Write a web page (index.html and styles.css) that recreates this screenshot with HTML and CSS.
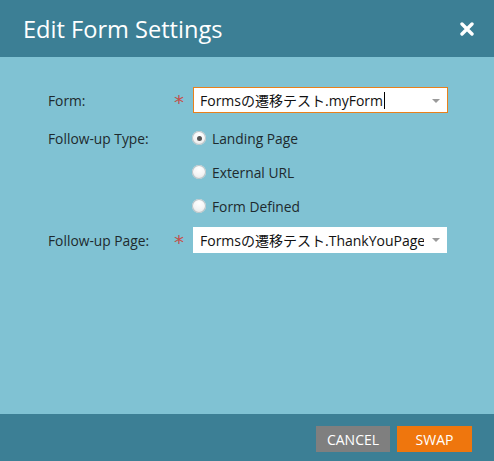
FILE: index.html
```html
<!DOCTYPE html>
<html>
<head>
<meta charset="utf-8">
<link rel="stylesheet" href="styles.css">
</head>
<body>
<div class="dialog">
  <div class="header">
    <span class="title">Edit Form Settings</span>
    <svg class="close" width="14" height="14" viewBox="0 0 14 14"><path d="M2 2 L12 12 M12 2 L2 12" stroke="#fff" stroke-width="3.4" stroke-linecap="round"/></svg>
  </div>
  <div class="content">
    <div class="row row-form">
      <div class="label">Form:</div>
      <div class="req">*</div>
      <div class="select focused"><span class="val">Formsの遷移テスト.myForm</span><span class="caret"></span><span class="arrow"></span></div>
    </div>
    <div class="row row-r1">
      <div class="label">Follow-up Type:</div>
      <div class="req"></div>
      <div class="radio"><span class="dot checked"></span><span>Landing Page</span></div>
    </div>
    <div class="row row-r2">
      <div class="label"></div>
      <div class="req"></div>
      <div class="radio"><span class="dot"></span><span>External URL</span></div>
    </div>
    <div class="row row-r3">
      <div class="label"></div>
      <div class="req"></div>
      <div class="radio"><span class="dot"></span><span>Form Defined</span></div>
    </div>
    <div class="row row-page">
      <div class="label">Follow-up Page:</div>
      <div class="req">*</div>
      <div class="select"><span class="val">Formsの遷移テスト.ThankYouPage</span><span class="arrow"></span></div>
    </div>
  </div>
  <div class="footer">
    <button class="btn cancel">CANCEL</button>
    <button class="btn swap">SWAP</button>
  </div>
</div>
</body>
</html>
```

FILE: styles.css
```css
html, body {
  margin: 0;
  padding: 0;
}
body {
  font-family: "Open Sans", "Noto Sans CJK JP", sans-serif;
  width: 494px;
  height: 461px;
  overflow: hidden;
}
.dialog {
  width: 494px;
  height: 461px;
  display: flex;
  flex-direction: column;
  background: #80c2d3;
}
.header {
  height: 57px;
  background: #3c7f95;
  display: flex;
  align-items: center;
  justify-content: space-between;
  padding: 0 20px 0 23px;
  box-sizing: border-box;
}
.title {
  color: #fff;
  font-size: 23.6px;
  line-height: 28px;
  margin-top: 1px;
}
.close {
  display: block;
}
.content {
  flex: 1;
  padding: 30px 0 0 48px;
  display: flex;
  flex-direction: column;
}
.row {
  display: flex;
  align-items: center;
}
.row-form { height: 26px; }
.row-r1 { height: 20px; margin-top: 15px; }
.row-r2 { height: 20px; margin-top: 14px; }
.row-r3 { height: 20px; margin-top: 14px; }
.row-page { height: 26px; margin-top: 11px; }
.label {
  width: 126px;
  font-size: 13.8px;
  color: #1e2a2e;
}
.req {
  width: 19px;
  color: #c4504a;
  font-size: 20px;
  line-height: 20px;
  height: 20px;
  padding-top: 2px;
  box-sizing: border-box;
  font-family: "DejaVu Sans", sans-serif;
}
.select {
  width: 254px;
  height: 26px;
  background: #fff;
  box-sizing: border-box;
  display: flex;
  align-items: center;
  padding-left: 7px;
  position: relative;
  font-size: 14px;
  color: #111;
  overflow: hidden;
  white-space: nowrap;
}
.select.focused {
  width: 255px;
  border: 1px solid #e8801b;
  padding-left: 6px;
}
.val {
  max-width: 224px;
  overflow: hidden;
}
.caret {
  display: inline-block;
  width: 1px;
  height: 17px;
  background: #000;
  margin-left: 1px;
}
.arrow {
  position: absolute;
  right: 7px;
  top: 11px;
  width: 0;
  height: 0;
  border-left: 4px solid transparent;
  border-right: 4px solid transparent;
  border-top: 4px solid #9a9a9a;
}
.radio {
  display: flex;
  align-items: center;
  font-size: 13.8px;
  color: #1e2a2e;
}
.dot {
  width: 14px;
  height: 14px;
  border-radius: 50%;
  background: radial-gradient(circle at 50% 30%, #ffffff 0%, #f4f4f4 50%, #dcdcdc 100%);
  box-shadow: inset 0 0 0 1px #b8c4c8;
  margin-right: 6px;
  margin-left: -1px;
  position: relative;
}
.dot.checked::after {
  content: "";
  position: absolute;
  left: 5px;
  top: 5px;
  width: 5px;
  height: 5px;
  border-radius: 50%;
  background: #555;
}
.footer {
  height: 47px;
  background: #3c7f95;
  display: flex;
  justify-content: flex-end;
  align-items: flex-start;
  padding: 12px 22px 0 0;
  box-sizing: border-box;
  gap: 7px;
}
.btn {
  height: 26px;
  border: none;
  color: #fff;
  font-family: "Open Sans", sans-serif;
  font-size: 14px;
  font-weight: 400;
  padding: 0;
  cursor: pointer;
}
.cancel {
  width: 74px;
  background: #7f7f7f;
}
.swap {
  width: 75px;
  background: #ef760d;
}
```
